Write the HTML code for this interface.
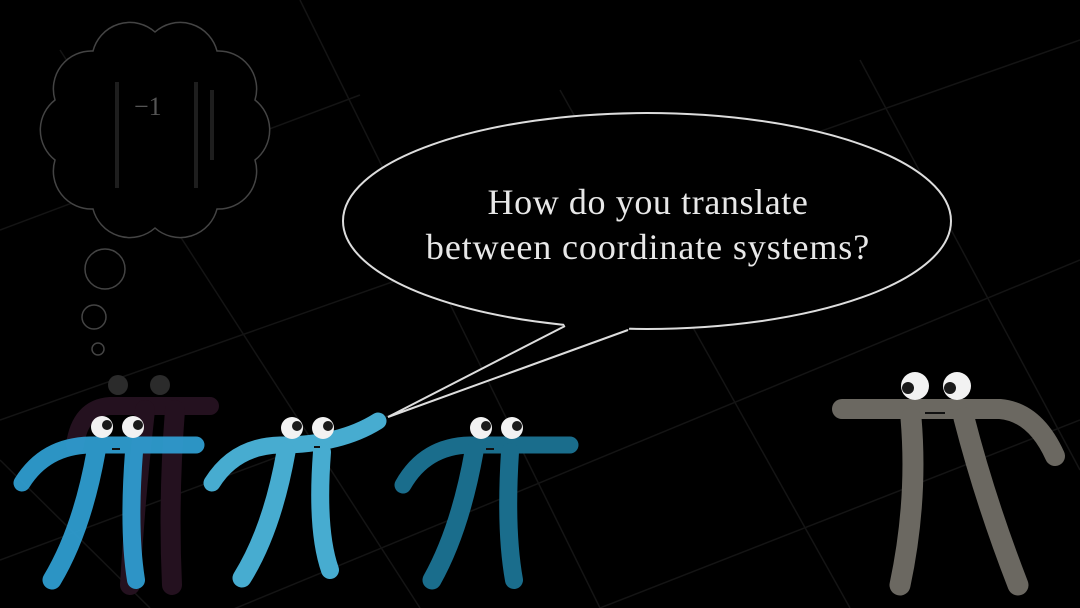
<!DOCTYPE html>
<html><head><meta charset="utf-8"><style>
html,body{margin:0;padding:0;background:#000;width:1080px;height:608px;overflow:hidden}
svg{display:block}
</style></head><body>
<svg width="1080" height="608" viewBox="0 0 1080 608" xmlns="http://www.w3.org/2000/svg">
<rect width="1080" height="608" fill="#000"/>
<g stroke="#141414" stroke-width="1.5" fill="none">
<line x1="0" y1="230" x2="360" y2="95"/>
<line x1="0" y1="420" x2="1080" y2="40"/>
<line x1="110" y1="660" x2="1080" y2="260"/>
<line x1="0" y1="560" x2="700" y2="300"/>
<line x1="300" y1="0" x2="600" y2="608"/>
<line x1="560" y1="90" x2="850" y2="608"/>
<line x1="60" y1="50" x2="420" y2="608"/>
<line x1="860" y1="60" x2="1080" y2="470"/>
<line x1="0" y1="460" x2="150" y2="608"/>
<line x1="600" y1="608" x2="1080" y2="420"/>
</g>
<!-- thought cloud -->
<path d="M155,32 A38,38 0 0 1 217,51 A38,38 0 0 1 255,100 A38,38 0 0 1 255,160 A38,38 0 0 1 217,209 A38,38 0 0 1 155,228 A38,38 0 0 1 93,209 A38,38 0 0 1 55,160 A38,38 0 0 1 55,100 A38,38 0 0 1 93,51 A38,38 0 0 1 155,32 Z" fill="#000" stroke="#444" stroke-width="1.5"/>
<g stroke="#1e1e1e" stroke-width="4" fill="none">
<line x1="117" y1="82" x2="117" y2="188"/>
<line x1="196" y1="82" x2="196" y2="188"/>
<line x1="212" y1="90" x2="212" y2="160"/>
</g>
<text x="134" y="115" font-family="Liberation Serif, serif" font-size="26" fill="#555">−1</text>
<circle cx="105" cy="269" r="20" fill="none" stroke="#444" stroke-width="1.5"/>
<circle cx="94" cy="317" r="12" fill="none" stroke="#444" stroke-width="1.5"/>
<circle cx="98" cy="349" r="6" fill="none" stroke="#444" stroke-width="1.5"/>
<!-- speech bubble -->
<ellipse cx="647" cy="221" rx="304" ry="108" fill="#000" stroke="#ddd" stroke-width="2"/>
<polygon points="563,322 630,326 628,331 388,417 565,326" fill="#000"/>
<polyline points="565,326 388,417 628,330" fill="none" stroke="#ddd" stroke-width="2"/>
<text x="648" y="214" text-anchor="middle" font-family="Liberation Serif, serif" font-size="36" letter-spacing="0.6" fill="#e8e8e8">How do you translate</text>
<text x="648" y="259" text-anchor="middle" font-family="Liberation Serif, serif" font-size="36" letter-spacing="0.9" fill="#e8e8e8">between coordinate systems?</text>
<!-- dark pi behind -->
<g stroke="#24111f" fill="none" stroke-linecap="round">
<path d="M75,445 Q80,408 110,406 L210,406" stroke-width="18"/>
<path d="M145,410 Q135,500 130,585" stroke-width="20"/>
<path d="M175,410 Q168,500 172,585" stroke-width="20"/>
</g>
<circle cx="118" cy="385" r="10" fill="#2b2b2b"/><circle cx="160" cy="385" r="10" fill="#2b2b2b"/>
<!-- pi 1 -->
<g stroke="#2f9ccf" fill="none" stroke-linecap="round" opacity="0.95">
<path d="M22,483 Q45,446 90,445 L196,445" stroke-width="17"/>
<path d="M96,452 Q82,530 52,580" stroke-width="19"/>
<path d="M134,452 Q128,530 136,580" stroke-width="18"/>
</g>
<line x1="112" y1="449" x2="120" y2="449" stroke="#111" stroke-width="2"/>
<!-- pi 2 -->
<g stroke="#47acd0" fill="none" stroke-linecap="round">
<path d="M212,483 Q235,446 280,445 Q340,445 378,421" stroke-width="17"/>
<path d="M286,452 Q272,530 242,578" stroke-width="19"/>
<path d="M322,452 Q316,530 330,570" stroke-width="18"/>
</g>
<line x1="314" y1="447" x2="320" y2="447" stroke="#111" stroke-width="2"/>
<!-- pi 3 -->
<g stroke="#1a6d8c" fill="none" stroke-linecap="round">
<path d="M403,485 Q425,446 470,445 L570,445" stroke-width="17"/>
<path d="M474,452 Q460,530 432,580" stroke-width="19"/>
<path d="M510,452 Q505,530 514,580" stroke-width="18"/>
</g>
<line x1="486" y1="449" x2="494" y2="449" stroke="#111" stroke-width="2"/>
<!-- gray pi -->
<g stroke="#6b6861" fill="none" stroke-linecap="round">
<path d="M842,409 L1000,409 Q1035,412 1055,456" stroke-width="20"/>
<path d="M911,418 Q918,500 900,585" stroke-width="21"/>
<path d="M964,418 Q985,500 1018,585" stroke-width="21"/>
</g>
<line x1="925" y1="413" x2="945" y2="413" stroke="#111" stroke-width="2"/>
<!-- eyes -->
<g fill="#f2f2f2">
<circle cx="102" cy="427" r="11"/><circle cx="133" cy="427" r="11"/>
<circle cx="292" cy="428" r="11"/><circle cx="323" cy="428" r="11"/>
<circle cx="481" cy="428" r="11"/><circle cx="512" cy="428" r="11"/>
<circle cx="915" cy="386" r="14"/><circle cx="957" cy="386" r="14"/>
</g>
<g fill="#1a1a1a">
<circle cx="107" cy="425" r="5"/><circle cx="138" cy="425" r="5"/>
<circle cx="297" cy="426" r="5"/><circle cx="328" cy="426" r="5"/>
<circle cx="486" cy="426" r="5"/><circle cx="517" cy="426" r="5"/>
<circle cx="908" cy="388" r="6"/><circle cx="950" cy="388" r="6"/>
</g>
</svg>
</body></html>
